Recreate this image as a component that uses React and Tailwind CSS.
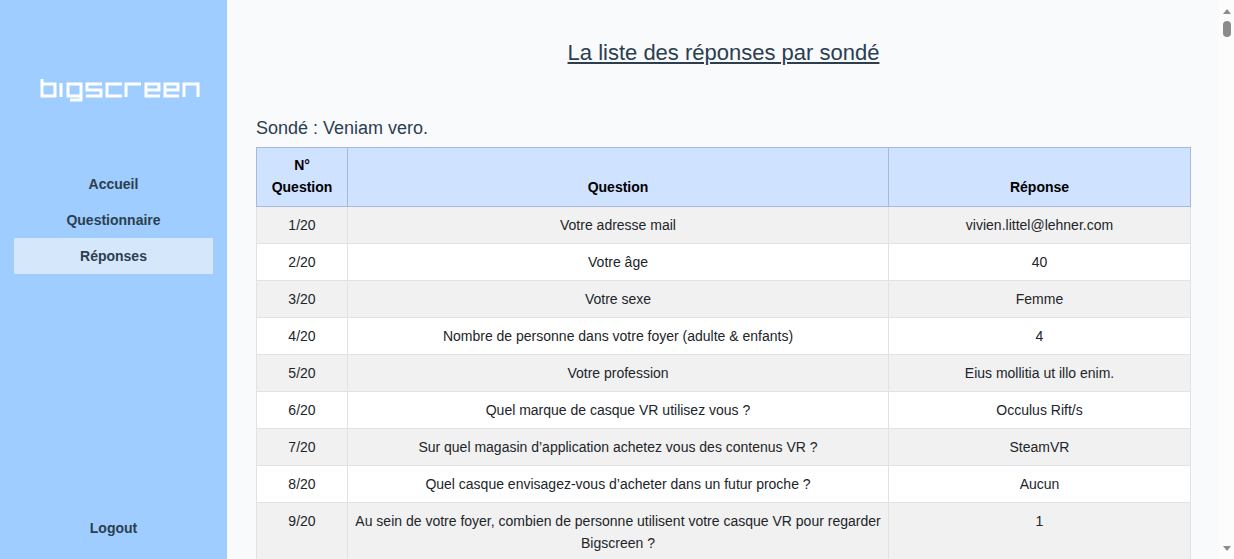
import React from "react";

const rows = [
  ["Votre adresse mail", "vivien.littel@lehner.com"],
  ["Votre âge", "40"],
  ["Votre sexe", "Femme"],
  ["Nombre de personne dans votre foyer (adulte & enfants)", "4"],
  ["Votre profession", "Eius mollitia ut illo enim."],
  ["Quel marque de casque VR utilisez vous ?", "Occulus Rift/s"],
  ["Sur quel magasin d’application achetez vous des contenus VR ?", "SteamVR"],
  ["Quel casque envisagez-vous d’acheter dans un futur proche ?", "Aucun"],
  ["Au sein de votre foyer, combien de personne utilisent votre casque VR pour regarder Bigscreen ?", "1"],
];

const links = ["Accueil", "Questionnaire", "Réponses"];

function Logo() {
  return (
    <svg role="img" aria-label="bigscreen" viewBox="0 0 160 24" className="h-6 w-40" fill="none" stroke="#fff" strokeWidth="3">
      <polyline points="2,1 2,18 15,18 15,6 2,6" />
      <polyline points="21,5 21,19" />
      <polyline points="41,18 28,18 28,6 41,6 41,22 30,22" />
      <polyline points="62,6 47,6 47,12 61,12 61,18 46,18" />
      <polyline points="82,6 67,6 67,18 82,18" />
      <polyline points="86,19 86,6 101,6" />
      <polyline points="120,18 106,18 106,6 119,6 119,12 106,12" />
      <polyline points="139,18 125,18 125,6 138,6 138,12 125,12" />
      <polyline points="144,19 144,6 158,6 158,19" />
    </svg>
  );
}

export default function App() {
  return (
    <div className="flex h-screen overflow-hidden bg-[#f8fafc] font-['Liberation_Sans',Arial,sans-serif] text-[#2c3e50]">
      <aside className="flex w-[227px] shrink-0 flex-col bg-[#9fcdff] px-3.5 pt-[78px] pb-[13px] text-center text-sm font-bold">
        <a href="#" className="flex justify-center pl-3">
          <Logo />
        </a>
        <nav className="mt-16 flex flex-col">
          {links.map((label) => (
            <a
              key={label}
              href="#"
              aria-current={label === "Réponses" ? "page" : undefined}
              className="py-2 leading-5 aria-[current=page]:bg-[#d5e7fb]"
            >
              {label}
            </a>
          ))}
        </nav>
        <button type="button" className="mt-auto py-2 leading-5">Logout</button>
      </aside>

      <main className="min-w-0 flex-1 overflow-hidden pt-[37px] pr-7 pl-[29px]">
        <h1 className="text-center text-[22px] leading-8 underline">La liste des réponses par sondé</h1>
        <h2 className="mt-[47px] text-lg leading-6">Sondé : Veniam vero.</h2>
        <table className="mt-[7px] w-full table-fixed border-collapse text-center text-sm leading-[22px] text-[#212529]">
          <colgroup>
            <col className="w-[91px]" />
            <col />
            <col className="w-[302px]" />
          </colgroup>
          <thead className="bg-[#cfe2ff] text-black">
            <tr>
              {["N° Question", "Question", "Réponse"].map((head) => (
                <th key={head} scope="col" className="border border-[#a6b9d9] px-1 pt-1.5 pb-2 align-bottom">
                  {head === "N° Question" ? <>N°<br />Question</> : head}
                </th>
              ))}
            </tr>
          </thead>
          <tbody>
            {rows.map(([question, answer], i) => (
              <tr key={question} className="bg-white odd:bg-[#f1f1f1]">
                <td className="border border-[#dfe2e6] px-1 py-[7px] align-top">{i + 1}/20</td>
                <td className="border border-[#dfe2e6] px-1 py-[7px] align-top">{question}</td>
                <td className="border border-[#dfe2e6] px-1 py-[7px] align-top">{answer}</td>
              </tr>
            ))}
          </tbody>
        </table>
      </main>

      <div aria-hidden="true" className="flex w-[15px] shrink-0 flex-col items-center bg-[#fcfcfc] pt-[9px] pb-2">
        <svg viewBox="0 0 8 5" className="h-[5px] w-2" fill="#8b8b8b"><path d="M0 5 4 0l4 5z" /></svg>
        <div className="mt-[7px] h-4 w-2 rounded-full bg-[#8b8b8b]" />
        <svg viewBox="0 0 8 5" className="mt-auto h-[5px] w-2" fill="#8b8b8b"><path d="M0 0h8L4 5z" /></svg>
      </div>
    </div>
  );
}
